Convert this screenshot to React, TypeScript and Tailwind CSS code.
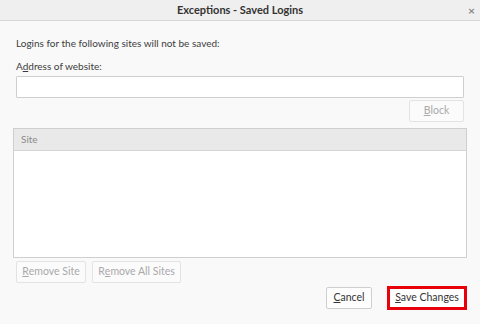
import React from "react";

const font = { fontFamily: 'Lato, "Open Sans", sans-serif' };

function Btn({ children, disabled, className = "" }: { children: React.ReactNode; disabled?: boolean; className?: string }) {
  return (
    <div
      className={`h-[22px] flex items-center justify-center whitespace-nowrap rounded-[2px] border text-[10.5px] ${
        disabled ? "border-[#e3e3e3] text-[#a9a9a9] bg-[#fbfbfb]" : "border-[#cfcfcf] text-[#333] bg-[#fdfdfd]"
      } ${className}`}
    >
      {children}
    </div>
  );
}

export default function App() {
  return (
    <div className="w-[480px] h-[324px] bg-[#f9f9f9] flex flex-col text-[#3c3c3c]" style={font}>
      <div className="h-[21px] shrink-0 bg-[#efefef] border-b border-[#d6d6d6] flex items-center relative">
        <div className="flex-1 text-center text-[11px] font-bold text-[#333]">Exceptions - Saved Logins</div>
        <div className="absolute right-[5px] top-[2px] text-[12px] text-[#888] font-bold">×</div>
      </div>
      <div className="flex flex-col px-[16px] pt-[15px]">
        <div className="text-[10px] leading-[15px] whitespace-nowrap">Logins for the following sites will not be saved:</div>
        <div className="text-[10px] leading-[15px] mt-[8px]">
          A<span className="underline">d</span>dress of website:
        </div>
        <div className="mt-[2px] h-[22px] border border-[#cfcfcf] bg-white rounded-[1px]" />
        <div className="flex justify-end mt-[2px]">
          <Btn disabled className="w-[55px]">
            <span className="underline">B</span>lock
          </Btn>
        </div>
      </div>
      <div className="mx-[13px] mt-[6px] h-[130px] border border-[#cfcfcf] bg-white flex flex-col">
        <div className="h-[22px] bg-[#e9e9e9] border-b border-[#d5d5d5] flex items-center pl-[7px] text-[10px] text-[#8a8a8a]">
          Site
        </div>
      </div>
      <div className="flex gap-[6px] px-[16px] mt-[3px]">
        <Btn disabled className="w-[70px]">
          <span className="underline">R</span>emove Site
        </Btn>
        <Btn disabled className="w-[89px]">
          R<span className="underline">e</span>move All Sites
        </Btn>
      </div>
      <div className="flex justify-end items-center gap-[15px] pr-[13px] mt-[3px]">
        <Btn className="w-[46px]">
          <span className="underline">C</span>ancel
        </Btn>
        <div className="border-[3px] border-[#e8000b] w-[80px] h-[24px] flex items-center justify-center whitespace-nowrap bg-white text-[10.5px] text-[#333]">
          <span className="underline">S</span>ave Changes
        </div>
      </div>
    </div>
  );
}
